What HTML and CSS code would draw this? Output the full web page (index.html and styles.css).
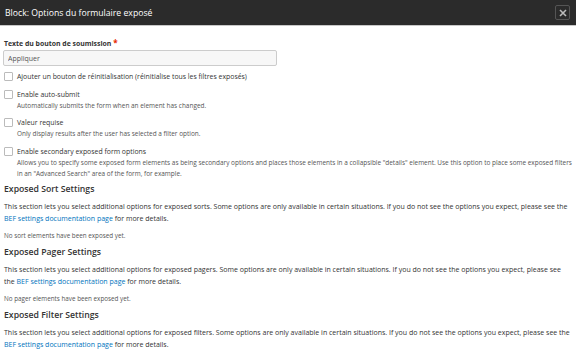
FILE: index.html
```html
<!DOCTYPE html>
<html lang="fr">
<head>
    <meta charset="UTF-8">
    <title>Block: Options du formulaire exposé</title>
    <link rel="stylesheet" href="styles.css">
</head>
<body>
    <div class="dialog">
        <header class="titlebar">
            <h1>Block: Options du formulaire exposé</h1>
            <button class="close" title="Fermer">
                <svg width="8" height="8" viewBox="0 0 8 8"><path d="M1 1L7 7M7 1L1 7" stroke="#bbb" stroke-width="1.6"/></svg>
            </button>
        </header>

        <main class="content">
            <div class="field">
                <label for="submitText" class="label">Texte du bouton de soumission <span class="req">*</span></label>
                <input type="text" id="submitText" class="text-input" value="Appliquer">
            </div>

            <div class="checks">
                <div class="check">
                    <span class="box"></span>
                    <span class="check-label">Ajouter un bouton de réinitialisation (réinitialise tous les filtres exposés)</span>
                </div>

                <div class="check">
                    <span class="box"></span>
                    <span class="check-label">Enable auto-submit</span>
                    <p class="desc">Automatically submits the form when an element has changed.</p>
                </div>

                <div class="check">
                    <span class="box"></span>
                    <span class="check-label">Valeur requise</span>
                    <p class="desc">Only display results after the user has selected a filter option.</p>
                </div>

                <div class="check">
                    <span class="box"></span>
                    <span class="check-label">Enable secondary exposed form options</span>
                    <p class="desc">Allows you to specify some exposed form elements as being secondary options and places those elements in a collapsible "details" element. Use this option to place some exposed filters in an "Advanced Search" area of the form, for example.</p>
                </div>
            </div>

            <section class="group">
                <h2>Exposed Sort Settings</h2>
                <p class="intro">This section lets you select additional options for exposed sorts. Some options are only available in certain situations. If you do not see the options you expect, please see the <a href="#">BEF settings documentation page</a> for more details.</p>
                <p class="empty">No sort elements have been exposed yet.</p>
            </section>

            <section class="group">
                <h2>Exposed Pager Settings</h2>
                <p class="intro">This section lets you select additional options for exposed pagers. Some options are only available in certain situations. If you do not see the options you expect, please see the <a href="#">BEF settings documentation page</a> for more details.</p>
                <p class="empty">No pager elements have been exposed yet.</p>
            </section>

            <section class="group">
                <h2>Exposed Filter Settings</h2>
                <p class="intro">This section lets you select additional options for exposed filters. Some options are only available in certain situations. If you do not see the options you expect, please see the <a href="#">BEF settings documentation page</a> for more details.</p>
            </section>
        </main>
    </div>
</body>
</html>
```

FILE: styles.css
```css
* {
    margin: 0;
    padding: 0;
    box-sizing: border-box;
}

body {
    font-family: 'Open Sans', sans-serif;
    color: #333;
    background: #fff;
    width: 576px;
    height: 350px;
    overflow: hidden;
}

.titlebar {
    height: 26px;
    background: #2b2b2b;
    border-bottom: 1px solid #c8c8c8;
    display: flex;
    align-items: center;
    justify-content: space-between;
    padding: 0 6px 0 5px;
}

.titlebar h1 {
    color: #fff;
    font-size: 8.7px;
    font-weight: 400;
}

.close {
    width: 15px;
    height: 15px;
    background: #2b2b2b;
    border: 1px solid #555;
    border-radius: 2px;
    display: flex;
    align-items: center;
    justify-content: center;
}

.content {
    padding: 12px 4px 0 4px;
}

.field {
    margin-bottom: 5px;
}

.label {
    display: block;
    font-weight: 700;
    font-size: 6.9px;
    line-height: 10px;
    margin-bottom: 1px;
}

.req {
    color: #e62600;
    font-size: 8px;
}

.text-input {
    display: block;
    width: 274px;
    height: 16px;
    margin-left: -1px;
    border: 1px solid #ccc;
    border-radius: 2px;
    background: #f7f7f7;
    padding: 0 4px;
    font-family: inherit;
    font-size: 7px;
    color: #555;
}

.checks {
    display: flex;
    flex-direction: column;
    gap: 6.5px;
    margin-bottom: 5px;
}

.check {
    position: relative;
    padding-left: 13px;
}

.box {
    position: absolute;
    left: 0;
    top: 1px;
    width: 9px;
    height: 9px;
    border: 1px solid #bbb;
    border-radius: 1px;
    background: #fff;
}

.check-label {
    display: block;
    font-size: 6.9px;
    line-height: 11px;
}

.desc {
    font-size: 6.45px;
    color: #555;
    line-height: 11px;
}

.group + .group {
    margin-top: 5.5px;
}

.group h2 {
    font-size: 8.7px;
    font-weight: 600;
    line-height: 11px;
    margin-bottom: 6.5px;
}

.intro {
    font-size: 7px;
    line-height: 11.5px;
}

.intro a {
    color: #0074bd;
    text-decoration: none;
}

.empty {
    font-size: 6.3px;
    line-height: 11px;
    color: #555;
    margin-top: 6px;
}
```
